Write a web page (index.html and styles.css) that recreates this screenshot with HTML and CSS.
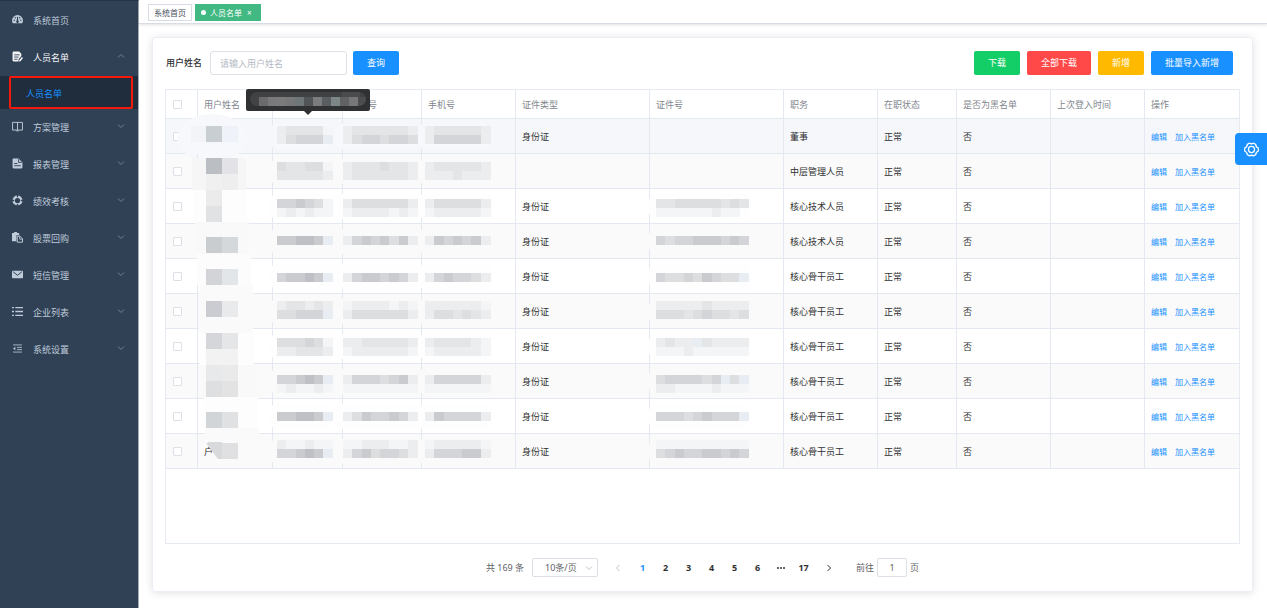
FILE: index.html
```html
<!DOCTYPE html>
<html lang="zh-CN">
<head>
<meta charset="utf-8">
<title>人员名单</title>
<link rel="stylesheet" href="styles.css">
</head>
<body>
<div class="app">
  <nav class="sidebar">
    <a class="item" href="#"><svg class="ico" viewBox="0 0 20 20"><path d="M10 2a10 10 0 0 0-10 10q0 3 1.500 5h17q1.500-2 1.500-5A10 10 0 0 0 10 2z" fill="currentColor"/><g fill="#304156"><circle cx="4" cy="11.500" r="1.300"/><circle cx="6" cy="6.800" r="1.300"/><circle cx="14" cy="6.800" r="1.300"/><circle cx="16" cy="11.500" r="1.300"/><path d="M9.300 5h1.600l.4 7a2.400 2.400 0 1 1-2.600 0z"/></g></svg><span>系统首页</span></a>
    <a class="item open" href="#"><svg class="ico" viewBox="0 0 20 20"><path d="M3 1h10l4 4v4l-5 6v4H3a2 2 0 0 1-2-2V3a2 2 0 0 1 2-2z" fill="currentColor"/><path d="M4 7h10M4 11h8M4 15h6" stroke="#304156" stroke-width="1.600"/><path d="M13 17l5-6 2 1.500-4.500 6L13 19z" fill="currentColor"/></svg><span>人员名单</span><svg class="arrow" viewBox="0 0 8 8"><path d="M1 5.500l3-3 3 3"/></svg></a>
    <div class="sub"><a class="subitem" href="#">人员名单</a></div>
    <a class="item" href="#"><svg class="ico" viewBox="0 0 20 20"><path d="M1 2.500h18v14H1zM10 2.500v14M8 18h4" fill="none" stroke="currentColor" stroke-width="1.700"/></svg><span>方案管理</span><svg class="arrow" viewBox="0 0 8 8"><path d="M1 2.500l3 3 3-3"/></svg></a>
    <a class="item" href="#"><svg class="ico" viewBox="0 0 20 20"><path d="M2 1h10l7 7v9a2 2 0 0 1-2 2H3a2 2 0 0 1-2-2V2z" fill="currentColor"/><path d="M12 2v6h6M4 10h6M4 14h12" fill="none" stroke="#304156" stroke-width="1.600"/></svg><span>报表管理</span><svg class="arrow" viewBox="0 0 8 8"><path d="M1 2.500l3 3 3-3"/></svg></a>
    <a class="item" href="#"><svg class="ico" viewBox="0 0 20 20"><circle cx="10" cy="10" r="7" fill="none" stroke="currentColor" stroke-width="4.500"/><path d="M10 0v4M10 16v4M0 10h4M16 10h4" stroke="#304156" stroke-width="2.400"/></svg><span>绩效考核</span><svg class="arrow" viewBox="0 0 8 8"><path d="M1 2.500l3 3 3-3"/></svg></a>
    <a class="item" href="#"><svg class="ico" viewBox="0 0 20 20"><path d="M0 2h4V0h5v2h4v4H8v11H0z" fill="currentColor"/><path d="M9.500 7.500h5l4.500 5v6H9.500z" fill="#304156" stroke="currentColor" stroke-width="1.800"/><path d="M14 8v5h5" fill="none" stroke="currentColor" stroke-width="1.600"/></svg><span>股票回购</span><svg class="arrow" viewBox="0 0 8 8"><path d="M1 2.500l3 3 3-3"/></svg></a>
    <a class="item" href="#"><svg class="ico" viewBox="0 0 20 20"><rect y="3" width="20" height="14" rx="1.500" fill="currentColor"/><path d="M2 5l8 6.500L18 5" fill="none" stroke="#304156" stroke-width="1.800"/></svg><span>短信管理</span><svg class="arrow" viewBox="0 0 8 8"><path d="M1 2.500l3 3 3-3"/></svg></a>
    <a class="item" href="#"><svg class="ico" viewBox="0 0 20 20"><path d="M0 3h3.500M6 3h14M0 10h3.500M6 10h14M0 17h3.500M6 17h14" stroke="currentColor" stroke-width="2.600"/></svg><span>企业列表</span><svg class="arrow" viewBox="0 0 8 8"><path d="M1 2.500l3 3 3-3"/></svg></a>
    <a class="item" href="#"><svg class="ico" viewBox="0 0 20 20"><path d="M2 3.500h16M9 8h9M9 12h9M2 16.500h16" stroke="currentColor" stroke-width="1.500"/><path d="M6 7v6l-4-3z" fill="currentColor"/></svg><span>系统设置</span><svg class="arrow" viewBox="0 0 8 8"><path d="M1 2.500l3 3 3-3"/></svg></a>
  </nav>
  <div class="main">
    <header class="tags">
      <a class="tag" href="#">系统首页</a>
      <a class="tag active" href="#"><i class="dot"></i>人员名单<span class="close">×</span></a>
    </header>
    <main class="content">
      <section class="card">
        <form class="toolbar">
          <label class="label" for="name">用户姓名</label>
          <input class="field" id="name" type="text" placeholder="请输入用户姓名">
          <button class="btn blue" type="button">查询</button>
          <div class="actions">
            <button class="btn green" type="button">下载</button>
            <button class="btn red" type="button">全部下载</button>
            <button class="btn amber" type="button">新增</button>
            <button class="btn blue" type="button">批量导入新增</button>
          </div>
        </form>
        <div class="tablebox">
          <table class="grid">
            <colgroup><col class="w32"><col class="w75"><col class="w70"><col class="w79"><col class="w94"><col class="w134"><col class="w134"><col class="w94"><col class="w79"><col class="w94"><col class="w94"><col></colgroup>
            <thead><tr><th class="pick"><input type="checkbox" aria-label="全选"></th><th>用户姓名</th><th></th><th class="tail">号</th><th>手机号</th><th>证件类型</th><th>证件号</th><th>职务</th><th>在职状态</th><th>是否为黑名单</th><th>上次登入时间</th><th>操作</th></tr></thead>
            <tbody id="rows"></tbody>
          </table>
        </div>
        <div class="pager">
          <span class="total">共 169 条</span>
          <span class="selectbox"><select class="size" aria-label="每页条数"><option>10条/页</option></select><svg class="caret" viewBox="0 0 8 8"><path d="M1 2.500l3 3 3-3"/></svg></span>
          <div class="pages">
            <button class="page step off" type="button" aria-label="上一页"><svg viewBox="0 0 8 8"><path d="M5.500 1l-3 3 3 3"/></svg></button>
            <button class="page current" type="button">1</button>
            <button class="page" type="button">2</button>
            <button class="page" type="button">3</button>
            <button class="page" type="button">4</button>
            <button class="page" type="button">5</button>
            <button class="page" type="button">6</button>
            <button class="page" type="button" aria-label="更多"><svg class="more" viewBox="0 0 8 8"><circle cx="1" cy="4" r="1"/><circle cx="4" cy="4" r="1"/><circle cx="7" cy="4" r="1"/></svg></button>
            <button class="page" type="button">17</button>
            <button class="page step" type="button" aria-label="下一页"><svg viewBox="0 0 8 8"><path d="M2.500 1l3 3-3 3"/></svg></button>
          </div>
          <label class="jump">前往<input class="goto" type="text" value="1">页</label>
        </div>
      </section>
    </main>
  </div>
  <button class="settings" type="button" aria-label="设置"><svg viewBox="0 0 20 20"><path d="M7.500 2.500Q10 4 12.500 2.500L15 4q0 3 3 4.200v3.600Q15 13 15 16l-2.500 1.500Q10 16 7.500 17.500L5 16q0-3-3-4.200V8.200Q5 7 5 4z"/><circle cx="10" cy="10" r="3.600"/></svg></button>
</div>
<script src="app.js"></script>
</body>
</html>
```
FILE: styles.css
```css
* { box-sizing: border-box; }
body { margin: 0; font-family: "Noto Sans", "Noto Sans CJK SC", sans-serif; font-size: 9px; line-height: 14px; color: #303133; background: #fff; }
a { text-decoration: none; color: inherit; }
button, input, select { font: inherit; color: inherit; margin: 0; }
.app { display: flex; min-height: 100vh; }
.sidebar { width: 139px; flex: none; background: #304156; border-top: 1px solid #263445; border-right: 1px solid #a3abb5; padding-top: 1px; color: #bfcbd9; }
.item { display: flex; align-items: center; height: 37px; padding: 0 12px; }
.item span { flex: 1; margin-left: 10px; }
.item.open { color: #f4f4f5; }
.ico { width: 11px; height: 11px; margin-bottom: 2px; }
.arrow, .caret { width: 8px; height: 8px; fill: none; stroke: #74818f; stroke-width: 1; }
.arrow { margin: 0 1px 4px 0; }
.sub { background: #1f2d3d; height: 33px; padding: 0 5px 0 9px; }
.subitem { display: flex; align-items: center; height: 33px; padding: 2px 0 0 15px; border: 2px solid #f5190c; border-radius: 2px; color: #1890ff; }
.main { flex: 1; min-width: 0; display: flex; flex-direction: column; }
.tags { display: flex; gap: 3px; height: 24px; padding: 4px 9px 2px; border-bottom: 1px solid #d8dce5; box-shadow: 0 1px 3px rgba(0,0,0,.12); font-size: 8px; }
.tag { display: flex; align-items: center; height: 17px; padding: 0 5px; border: 1px solid #d8dce5; color: #495060; }
.tag.active { background: #42b983; border-color: #42b983; color: #fff; }
.dot { width: 5px; height: 5px; border-radius: 50%; background: #fff; margin-right: 4px; }
.close { margin: 0 3px 0 5px; }
.content { flex: 1; display: flex; padding: 13px 14px 16px 13px; }
.card { flex: 1; min-width: 0; display: flex; flex-direction: column; padding: 13px 12px 0; border: 1px solid #ebeef5; border-radius: 3px; background: #fff; box-shadow: 0 1px 9px rgba(0,0,0,.12); }
.toolbar { display: flex; align-items: center; margin: 0 7px 14px 1px; }
.label { font-weight: 500; margin-right: 8px; }
.field { width: 137px; height: 24px; padding: 0 9px; border: 1px solid #dcdfe6; border-radius: 3px; margin-right: 6px; outline: 0; }
.field::placeholder { color: #b4b9c3; opacity: 1; }
.btn { height: 24px; padding: 0 14px; border: 0; border-radius: 2px; color: #fff; white-space: nowrap; }
.blue { background: #1890ff; }
.green { background: #13ce66; }
.red { background: #ff4949; }
.amber { background: #ffba00; }
.actions { display: flex; gap: 7px; margin-left: auto; }
.tablebox { flex: 1; border: 1px solid #e6ebf2; }
.grid { width: 100%; table-layout: fixed; border-collapse: separate; border-spacing: 0; }
.w32 { width: 32px; } .w70 { width: 70px; } .w75 { width: 75px; } .w79 { width: 79px; } .w94 { width: 94px; } .w134 { width: 134px; }
.grid th, .grid td { position: relative; height: 35px; padding: 1px 6px 0; text-align: left; font-weight: 400; white-space: nowrap; border-right: 1px solid #e4e9f1; border-bottom: 1px solid #e4e9f1; }
.grid th { height: 29px; color: #81858d; }
.grid th:last-child, .grid td:last-child { border-right: 0; }
.grid th.tail { padding-left: 25px; }
.grid .pick { padding: 0 0 0 7px; }
.pick input { display: block; appearance: none; width: 9px; height: 9px; border: 1px solid #dcdfe6; border-radius: 1px; background: #fff; }
.grid tbody tr:nth-child(even) { background: #fafafa; }
.grid tbody tr.hover { background: #f5f7fa; }
.links { font-size: 8px; color: #1890ff; }
.links a + a { margin-left: 8px; }
.mosaic { position: absolute; left: 0; top: 0; width: 100%; height: 100%; overflow: visible; pointer-events: none; }
.tip { position: absolute; z-index: 2; left: 50%; bottom: 100%; width: 124px; height: 22px; margin: 0 0 8px -62px; background: #303133; border-radius: 2px; }
.tip::after { content: ""; position: absolute; left: 58px; top: 22px; border: 4px solid transparent; border-top-color: #303133; }
.tip svg { display: block; width: 124px; height: 22px; }
.pager { display: flex; align-items: center; justify-content: center; height: 47px; color: #606266; }
.selectbox { position: relative; margin: 0 8px; }
.size { display: block; appearance: none; width: 66px; height: 19px; padding: 0 0 0 12px; border: 1px solid #dcdfe6; border-radius: 2px; background: #fff; }
.caret { position: absolute; right: 5px; top: 6px; stroke: #c0c4cc; }
.pages { display: flex; gap: 4px; }
.page { display: flex; align-items: center; justify-content: center; min-width: 19px; height: 19px; padding: 0 4px; border: 0; background: none; font-weight: 700; color: #303133; }
.page.step { margin: 0 2px; }
.page svg { width: 8px; height: 8px; fill: none; stroke: currentColor; }
.page .more { fill: currentColor; stroke: none; }
.page.off { color: #c0c4cc; }
.page.current { color: #1890ff; }
.jump { display: flex; align-items: center; margin-left: 16px; }
.goto { width: 30px; height: 19px; margin: 0 3px; padding: 0; text-align: center; border: 1px solid #dcdfe6; border-radius: 2px; }
.settings { position: absolute; right: 0; top: 133px; display: flex; align-items: center; justify-content: center; width: 32px; height: 32px; padding: 0; border: 0; border-radius: 4px 0 0 4px; background: #1890ff; }
.settings svg { width: 17px; height: 17px; fill: none; stroke: #fff; stroke-width: 1.5; }
```
FILE: app.js
```js
// Grey levels of the masked blocks, light to dark.
const tones = { 1: '#f4f5f6', 2: '#ecedef', 3: '#e4e5e7', 4: '#dcdee0', 5: '#d4d5d8', 6: '#cacbcf', 7: '#bec0c5', 8: '#e8edf4' };
const rect = (x, y, w, h, fill, r = 0) => `<rect x="${x}" y="${y}" width="${w}" height="${h}" rx="${r}" fill="${fill}"/>`;
const svg = body => `<svg class="mosaic" aria-hidden="true">${body}</svg>`;

// One entry per row: offset of the first band, then bands for the three id columns and the document number.
const masks = [
  [7, ['233331', '23333332', '2333332'], ['245558', '24554554', '2555552'], null],
  [43, ['433441', '23334332', '2333332'], ['333332', '23333332', '2223222'], null],
  [80, ['556541', '24444442', '2444442'], ['121211', '12222121', '1222221'], ['3344444343', '1111112110']],
  [117, ['667768', '25656462', '2656562'], null, ['5455666565']],
  [154, ['566768', '25665652', '2565542'], null, ['5445465448']],
  [182, ['233232', '12222121', '2222221'], ['445558', '24444442', '2443432'], ['2222232222', '4443454434']],
  [219, ['444541', '22333332', '2333321'], ['223332', '12222221', '1222221'], ['2322832222', '1112111111']],
  [256, ['556768', '25554562', '2555552'], ['121121', '11111111', '1111111'], ['4555545848', '2211112111']],
  [293, ['667768', '24655652', '2655552'], null, ['5554565558']],
  [321, ['211211', '11222112', '1222221'], ['556768', '25645542', '2555662'], ['1111111111', '4565566565']]
];
// Name column: top of the block, left colour, right colour.
const names = [
  [[7, '#c9ced3', '#eff3f9']],
  [[39, '#bbbfc4', '#e2e2e7'], [55, '#f0f0f0', '#eeeeee']],
  [[71, '#ebebec', ''], [87, '#e1e2e3', '']],
  [[118, '#c9cdd0', '#d4d8da']],
  [[150, '#d2d4d8', '#e2e6e9']],
  [[182, '#cbccd1', '#e9eaeb']],
  [[214, '#d5d6da', '#e5e6e8'], [230, '#f2f2f3', '#f2f2f3']],
  [[246, '#e8e9eb', '#eaeaeb'], [262, '#dedfe1', '#e3e3e4']],
  [[293, '#d1d5d8', '#e0e1e3']],
  []
];
const jobs = ['董事', '中层管理人员', '核心技术人员', '核心技术人员', '核心骨干员工', '核心骨干员工', '核心骨干员工', '核心骨干员工', '核心骨干员工', '核心骨干员工'];
// Veil behind each name: top, height, colour.
const veils = [null, [39, 32, '#f6f6f7'], [71, 32, '#fdfdfd'], [103, 32, '#f9f9f9'], [135, 31, '#fcfcfc'], [166, 48, '#fafafb'], [214, 32, '#fdfdfd'], [246, 32, '#f9f9fa'], [278, 31, '#fdfdfd'], [309, 16, '#fafafa']];

function bands(i, col, x) {
  const m = masks[i];
  const lines = col === 3 ? m[3] : [m[1][col], m[2] && m[2][col]].filter(Boolean);
  if (!lines) return '';
  const y = m[0] - i * 35;
  const bg = i === 0 ? '#f6f8fb' : i % 2 ? '#fafafa' : '#fefefe';
  let out = rect(x - 7, 5, 9 * lines[0].length + 11, 25, bg, 7);
  lines.forEach((line, k) => [...line].forEach((c, n) => {
    if (tones[c]) out += rect(x + Math.round(n * 9.25), y + k * 9, 10, 9, tones[c]);
  }));
  return svg(out);
}
function nameMask(i) {
  let out = '';
  if (i === 0) {
    out = '<ellipse cx="14" cy="19" rx="35" ry="24" fill="#f6f8fb"/>' + rect(-7, 7, 15, 16, '#f2f4f7');
  } else {
    const [top, h, fill] = veils[i];
    out = rect(-8 + Math.round(i * 1.7), top - i * 35, 54, h, fill);
  }
  if (i === 9) out += '<path d="M8 9h16v16h-4z" fill="#d8d9db"/>' + rect(10, 8, 14, 4, '#d8d9db') + rect(24, 9, 16, 16, '#e0e0e2');
  for (const [y, a, b] of names[i]) {
    out += rect(8, y - i * 35, 16, 16, a);
    if (b) out += rect(24, y - i * 35, 16, 16, b);
  }
  return svg(out);
}
const tipTones = ['#424344', '#6b6b6d', '#79797b', '#7c7b7c', '#77777a', '#6e7677', '#525558', '#7b7c7e', '#5b5e61', '#7c8887', '#616264', '#77777a', '#4c4d4f'];
const tip = '<div class="tip" role="tooltip"><svg viewBox="0 0 124 22"><defs><clipPath id="pill"><rect x="4" y="3" width="116" height="14" rx="7"/></clipPath></defs><g clip-path="url(#pill)">' +
  rect(4, 3, 116, 6, '#404143') + rect(96, 3, 18, 6, '#4a4b4c') + tipTones.map((c, n) => rect(4 + n * 9, 8, 9, 9, c)).join('') + '</g></svg></div>';

document.getElementById('rows').innerHTML = jobs.map((job, i) => `<tr class="${i ? '' : 'hover'}">
  <td class="pick"><input type="checkbox" aria-label="选择第${i + 1}行"></td>
  <td>${i === 9 ? '户' : ''}${nameMask(i)}</td>
  <td>${bands(i, 0, 4)}${i ? '' : tip}</td>
  <td>${bands(i, 1, 0)}</td>
  <td>${bands(i, 2, 3)}</td>
  <td>${i === 1 ? '' : '身份证'}</td>
  <td>${bands(i, 3, 6)}</td>
  <td>${job}</td><td>正常</td><td>否</td><td></td>
  <td class="links"><a href="#">编辑</a><a href="#">加入黑名单</a></td></tr>`).join('');
```
